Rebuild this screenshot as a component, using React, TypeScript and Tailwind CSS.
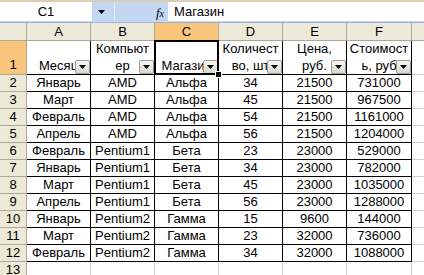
import React from "react";

const widths = [64, 64, 64, 64, 64, 65];
const letters = ["A", "B", "C", "D", "E", "F"];
const head: string[][] = [
  ["Месяц"],
  ["Компьют", "ер"],
  ["Магазин"],
  ["Количест", "во, шт"],
  ["Цена,", "руб."],
  ["Стоимост", "ь, руб"],
];
const data: string[][] = [
  ["Январь", "AMD", "Альфа", "34", "21500", "731000"],
  ["Март", "AMD", "Альфа", "45", "21500", "967500"],
  ["Февраль", "AMD", "Альфа", "54", "21500", "1161000"],
  ["Апрель", "AMD", "Альфа", "56", "21500", "1204000"],
  ["Февраль", "Pentium1", "Бета", "23", "23000", "529000"],
  ["Январь", "Pentium1", "Бета", "34", "23000", "782000"],
  ["Март", "Pentium1", "Бета", "45", "23000", "1035000"],
  ["Апрель", "Pentium1", "Бета", "56", "23000", "1288000"],
  ["Январь", "Pentium2", "Гамма", "15", "9600", "144000"],
  ["Март", "Pentium2", "Гамма", "23", "32000", "736000"],
  ["Февраль", "Pentium2", "Гамма", "34", "32000", "1088000"],
];

function Arrow() {
  return (
    <svg width="7" height="4" viewBox="0 0 7 4">
      <path d="M0 0H7L3.5 4Z" fill="#000" />
    </svg>
  );
}

function FilterBtn() {
  return (
    <div className="absolute right-0 bottom-0 z-10 w-[15px] h-[14px] flex items-center justify-center rounded-[2px] border border-[#9c9a94] bg-gradient-to-b from-[#f7f6f2] to-[#d9d6cc]">
      <Arrow />
    </div>
  );
}

export default function App() {
  return (
    <div className="w-[424px] h-[275px] overflow-hidden bg-white font-['Liberation_Sans',Arial,sans-serif] text-[13px] text-black">
      {/* top strip */}
      <div className="h-[2px] bg-[#d9cfb4]" />
      {/* formula bar */}
      <div className="h-[21px] flex items-stretch bg-[#c3d7f2] border-b border-[#9db3d4]">
        <div className="w-[92px] bg-white flex items-center justify-center leading-[16px] mb-[1px]">C1</div>
        <div className="w-[18px] flex items-center justify-center">
          <Arrow />
        </div>
        <div className="w-[5px] border-r border-[#e2ecfa]" />
        <div className="w-[53px] flex items-center justify-end pr-[4px]">
          <span className="italic font-['Liberation_Serif',serif] text-[13px] leading-none">
            f<span className="text-[10px]">x</span>
          </span>
        </div>
        <div className="flex-1 bg-white flex items-center pl-[6px] leading-[16px] mb-[1px]">Магазин</div>
      </div>
      {/* column headers */}
      <div className="flex h-[18px]">
        <div className="w-[27px] shrink-0 bg-[#ece9d8] border-r border-b border-[#aca899]" />
        {letters.map((l, i) => (
          <div
            key={l}
            style={{ width: widths[i] }}
            className={`shrink-0 border-r border-b border-[#aca899] flex items-center justify-center leading-[16px] ${
              i === 2 ? "bg-[#f9c47c]" : "bg-[#ece9d8]"
            }`}
          >
            {l}
          </div>
        ))}
        <div className="flex-1 bg-[#ece9d8] border-b border-[#aca899]" />
      </div>
      {/* row 1 */}
      <div className="flex h-[34px]">
        <div className="w-[27px] shrink-0 bg-[#f9c47c] border-r border-b border-[#aca899] flex items-end justify-center leading-[16px] pb-[1px]">
          1
        </div>
        {head.map((lines, i) => (
          <div
            key={i}
            style={{ width: widths[i] }}
            className="shrink-0 relative border-r border-b border-black flex flex-col items-center justify-end leading-[17px] whitespace-nowrap overflow-visible"
          >
            {lines.map((t, j) => (
              <div key={j}>{t}</div>
            ))}
            <FilterBtn />
            {i === 2 && (
              <>
                <div className="absolute -left-[1px] -top-[1px] -right-[1px] -bottom-[1px] border-2 border-black z-20 pointer-events-none" />
                <div className="absolute -right-[3px] -bottom-[3px] w-[5px] h-[5px] bg-black outline outline-1 outline-white z-30" />
              </>
            )}
          </div>
        ))}
        <div className="flex-1 border-b border-[#d4d0c8]" />
      </div>
      {/* data rows */}
      {data.map((row, r) => (
        <div key={r} className="flex h-[17px]">
          <div className="w-[27px] shrink-0 bg-[#ece9d8] border-r border-b border-[#aca899] flex items-center justify-center leading-[16px]">
            {r + 2}
          </div>
          {row.map((v, i) => (
            <div
              key={i}
              style={{ width: widths[i] }}
              className="shrink-0 border-r border-b border-black flex items-center justify-center leading-[16px] whitespace-nowrap"
            >
              {v}
            </div>
          ))}
          <div className="flex-1 border-b border-[#d4d0c8]" />
        </div>
      ))}
      {/* row 13 */}
      <div className="flex h-[17px]">
        <div className="w-[27px] shrink-0 bg-[#ece9d8] border-r border-b border-[#aca899] flex items-center justify-center leading-[16px]">
          13
        </div>
        {widths.map((w, i) => (
          <div key={i} style={{ width: w }} className="shrink-0 border-r border-b border-[#d4d0c8]" />
        ))}
        <div className="flex-1 border-b border-[#d4d0c8]" />
      </div>
    </div>
  );
}
